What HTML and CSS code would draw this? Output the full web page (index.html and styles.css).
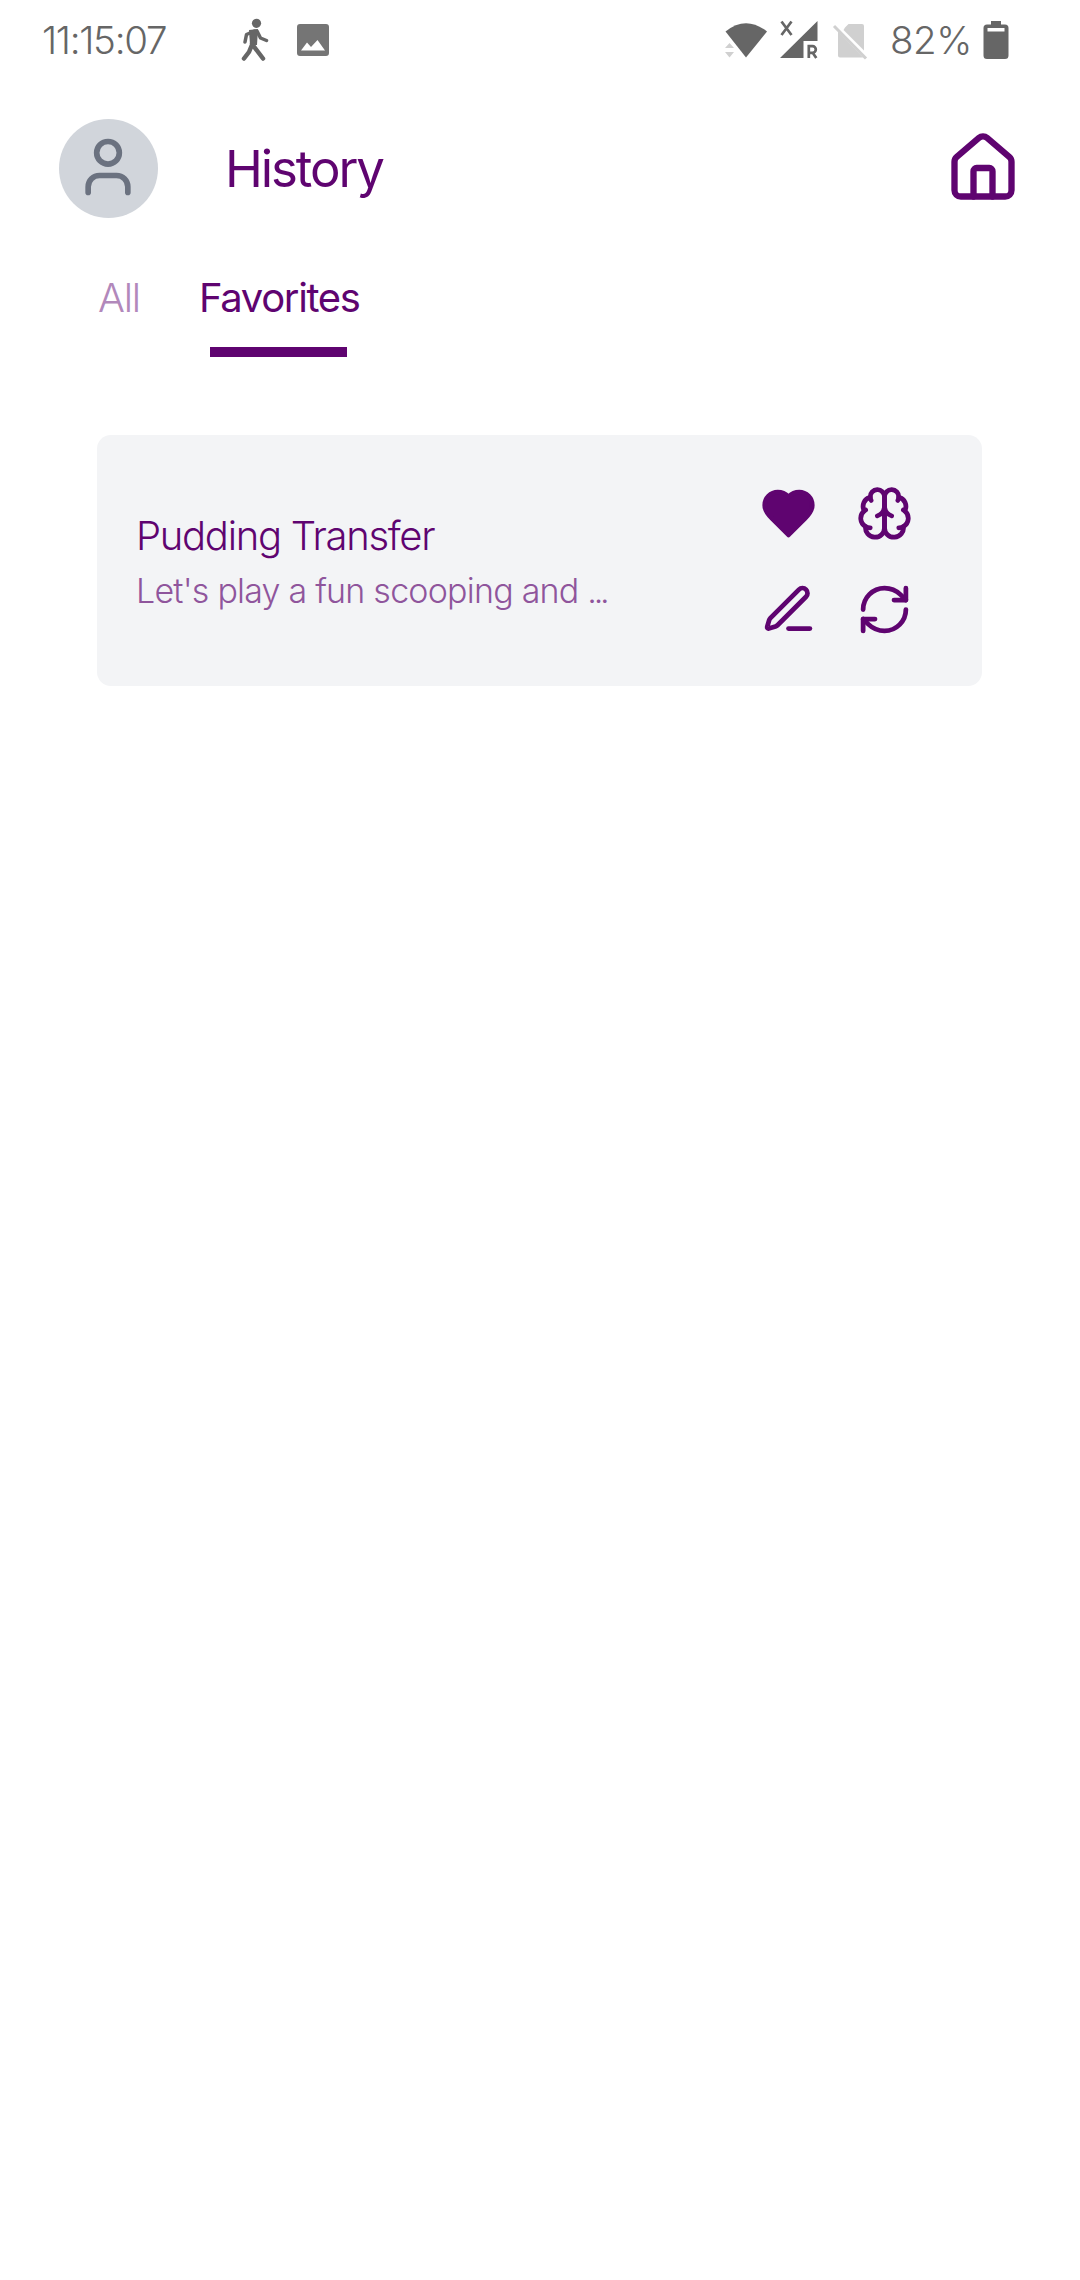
FILE: index.html
```html
<!DOCTYPE html>
<html lang="en">
<head>
<meta charset="utf-8">
<title>History</title>
<link rel="stylesheet" href="styles.css">
</head>
<body>
<div class="status-bar">
  <span class="clock">11:15:07</span>
  <svg class="walk" viewBox="240 18 30 44" width="30" height="44">
    <circle cx="256.500" cy="23.300" r="4.600"/>
    <path d="M256 32L252 44L263 58.500M251.500 46L249 52L244 58.500" class="walk-leg"/>
    <path d="M254.500 31L246.500 34.500L245 42M257 31L260.500 38L266.500 40.500" class="walk-arm"/>
    <path d="M249 30L258 29L257 45L250 45Z"/>
  </svg>
  <svg class="photo" viewBox="0 0 32 32" width="32" height="32">
    <path fill-rule="evenodd" d="M3 0H29A3 3 0 0 1 32 3V29A3 3 0 0 1 29 32H3A3 3 0 0 1 0 29V3A3 3 0 0 1 3 0ZM4 26.500H28L20.500 16L14 23L10 18.500Z"/>
  </svg>
  <svg class="wifi" viewBox="725 22 43 36" width="43" height="36">
    <path d="M725.500 31.500Q746 15 767 31.500L746 57.500Z"/>
    <path class="faint" d="M725 48L729.500 43L734 48ZM725 52H734L729.500 57.500Z"/>
  </svg>
  <svg class="signal" viewBox="780 19 40 41" width="40" height="41">
    <path d="M817.500 21V41H803.500V58H780Z"/>
    <path class="letter-line" d="M781.500 21.500L791.500 35M791.500 21.500L781.500 35M808.800 58V46.200H812.500A3.300 3.300 0 0 1 812.500 52.800H809M812.500 52.500L816.300 58"/>
  </svg>
  <svg class="no-sim" viewBox="832 23 36 37" width="36" height="37">
    <path class="faint" d="M845 27.500L848.500 24H862A2 2 0 0 1 864 26V50.500L843.500 30ZM838.500 32L863 57.500H840A2 2 0 0 1 838 55.500V32Z"/>
    <path class="slash" d="M834 26L866 58.500"/>
  </svg>
  <span class="percent">82%</span>
  <svg class="battery" viewBox="0 0 26 38" width="26" height="38">
    <path fill-rule="evenodd" d="M8 0H18V3.500H22A3.500 3.500 0 0 1 25.500 7V34.500A3.500 3.500 0 0 1 22 38H4A3.500 3.500 0 0 1 .5 34.500V7A3.500 3.500 0 0 1 4 3.500H8ZM4.500 7V10.500H21.500V7Z"/>
  </svg>
</div>
<header class="header">
  <div class="avatar">
    <svg class="icon" viewBox="0 0 24 24" width="68" height="68"><path d="M19 21v-2a4 4 0 0 0-4-4H9a4 4 0 0 0-4 4v2"/><circle cx="12" cy="7" r="4"/></svg>
  </div>
  <h1 class="title">History</h1>
  <svg class="icon home" viewBox="0 0 24 24" width="76" height="76"><path d="M15 21v-8a1 1 0 0 0-1-1h-4a1 1 0 0 0-1 1v8"/><path d="M3 10a2 2 0 0 1 .709-1.528l7-5.999a2 2 0 0 1 2.582 0l7 5.999A2 2 0 0 1 21 10v9a2 2 0 0 1-2 2H5a2 2 0 0 1-2-2z"/></svg>
</header>
<nav class="tabs">
  <div class="tab tab-all">All</div>
  <div class="tab tab-active">Favorites</div>
</nav>
<main class="list">
  <article class="card">
    <div class="card-text">
      <h2 class="card-title">Pudding Transfer</h2>
      <p class="card-desc">Let's play a fun scooping and <span class="dots">...</span></p>
    </div>
    <div class="actions">
      <svg class="icon heart" viewBox="0 0 24 24"><path d="M19 14c1.490-1.460 3-3.210 3-5.500A5.500 5.500 0 0 0 16.500 3c-1.760 0-3 .5-4.500 2-1.500-1.500-2.740-2-4.500-2A5.500 5.500 0 0 0 2 8.500c0 2.300 1.500 4.050 3 5.500l7 7Z"/></svg>
      <svg class="icon" viewBox="0 0 24 24"><path d="M12 5a3 3 0 1 0-5.997.125 4 4 0 0 0-2.526 5.770 4 4 0 0 0 .556 6.588A4 4 0 1 0 12 18Z"/><path d="M12 5a3 3 0 1 1 5.997.125 4 4 0 0 1 2.526 5.770 4 4 0 0 1-.556 6.588A4 4 0 1 1 12 18Z"/><path d="M15 13a4.500 4.500 0 0 1-3-4 4.500 4.500 0 0 1-3 4"/><path d="M17.599 6.500a3 3 0 0 0 .399-1.375"/><path d="M6.003 5.125A3 3 0 0 0 6.401 6.500"/><path d="M3.477 10.896a4 4 0 0 1 .585-.396"/><path d="M19.938 10.500a4 4 0 0 1 .585.396"/><path d="M6 18a4 4 0 0 1-1.967-.516"/><path d="M19.967 17.484A4 4 0 0 1 18 18"/></svg>
      <svg class="icon" viewBox="0 0 24 24"><path d="M12 20h9"/><path d="M16.376 3.622a1 1 0 0 1 3.002 3.002L7.368 18.635a2 2 0 0 1-.855.506l-2.872.838a.5.5 0 0 1-.62-.62l.838-2.872a2 2 0 0 1 .506-.854z"/></svg>
      <svg class="icon" viewBox="0 0 24 24"><path d="M3 12a9 9 0 0 1 9-9 9.750 9.750 0 0 1 6.740 2.740L21 8"/><path d="M21 3v5h-5"/><path d="M21 12a9 9 0 0 1-9 9 9.750 9.750 0 0 1-6.740-2.740L3 16"/><path d="M8 16H3v5"/></svg>
    </div>
  </article>
</main>
</body>
</html>
```
FILE: styles.css
```css
* { box-sizing: border-box; margin: 0; padding: 0; }

body {
  background: #fff;
  color: #5f0470;
  font-family: Inter, "Liberation Sans", sans-serif;
  white-space: nowrap;
}

.status-bar {
  display: flex;
  height: 80px;
  padding-left: 42px;
  color: #666;
  fill: #666;
  font-size: 38.5px;
  font-weight: 300;
  line-height: 80px;
}
.status-bar svg { flex: none; }
.clock { width: 198px; letter-spacing: -1.3px; }
.walk { margin-top: 18px; }
.walk-leg, .walk-arm { fill: none; stroke: #666; stroke-linecap: round; stroke-linejoin: round; }
.walk-leg { stroke-width: 4.5; }
.walk-arm { stroke-width: 3.5; }
.photo { margin: 24px 0 0 27px; fill: #757575; }
.wifi { margin: 22px 0 0 396px; }
.signal { margin: 19px 0 0 12px; }
.letter-line { fill: none; stroke: #666; stroke-width: 2.7; }
.no-sim { margin: 23px 0 0 12px; }
.faint { fill: #d0d0d0; }
.slash { stroke: #d0d0d0; stroke-width: 3; }
.percent { width: 92.5px; margin-left: 22px; letter-spacing: -.5px; }
.battery { margin: 21px 0 0 0; }

.icon {
  flex: none;
  fill: none;
  stroke: currentColor;
  stroke-width: 2;
  stroke-linecap: round;
  stroke-linejoin: round;
}

.header {
  display: flex;
  align-items: center;
  height: 177px;
  padding: 0 59px;
}
.avatar {
  width: 99px;
  height: 99px;
  padding: 14px 15px;
  border-radius: 50%;
  background: #d1d5db;
  color: #6b7280;
}
.title {
  flex: 1;
  padding-left: 67px;
  font-size: 51px;
  font-weight: 400;
  letter-spacing: -2.1px;
}
.home { margin-bottom: 2px; }
.tabs { display: flex; height: 178px; padding-left: 98px; font-size: 40px; }
.tab { height: 100px; line-height: 82px; }
.tab-all { width: 101px; color: #b288bb; font-weight: 300; letter-spacing: -1.3px; }
.tab-active { font-weight: 400; letter-spacing: -1.35px; }
.tab-active::after {
  content: "";
  display: block;
  width: 137px;
  height: 10px;
  margin: 8px 0 0 11px;
  background: #5f0470;
}
.list { padding: 0 98px 0 97px; }
.card {
  display: flex;
  height: 251px;
  padding: 50px 69.5px 0 39px;
  border-radius: 14px;
  background: #f3f4f6;
}
.card-text { flex: 1; padding-top: 23px; }
.card-title { font-size: 40px; font-weight: 300; line-height: 56px; letter-spacing: -1.3px; }
.card-desc { color: #8f559c; font-size: 34px; font-weight: 300; line-height: 54px; letter-spacing: -.78px; }
.dots { letter-spacing: -3.2px; }
.actions { display: grid; grid-template-columns: repeat(2, 57px); grid-auto-rows: 57px; gap: 38.5px; }
.actions svg { width: 57px; height: 57px; }
.heart { fill: currentColor; }
```
